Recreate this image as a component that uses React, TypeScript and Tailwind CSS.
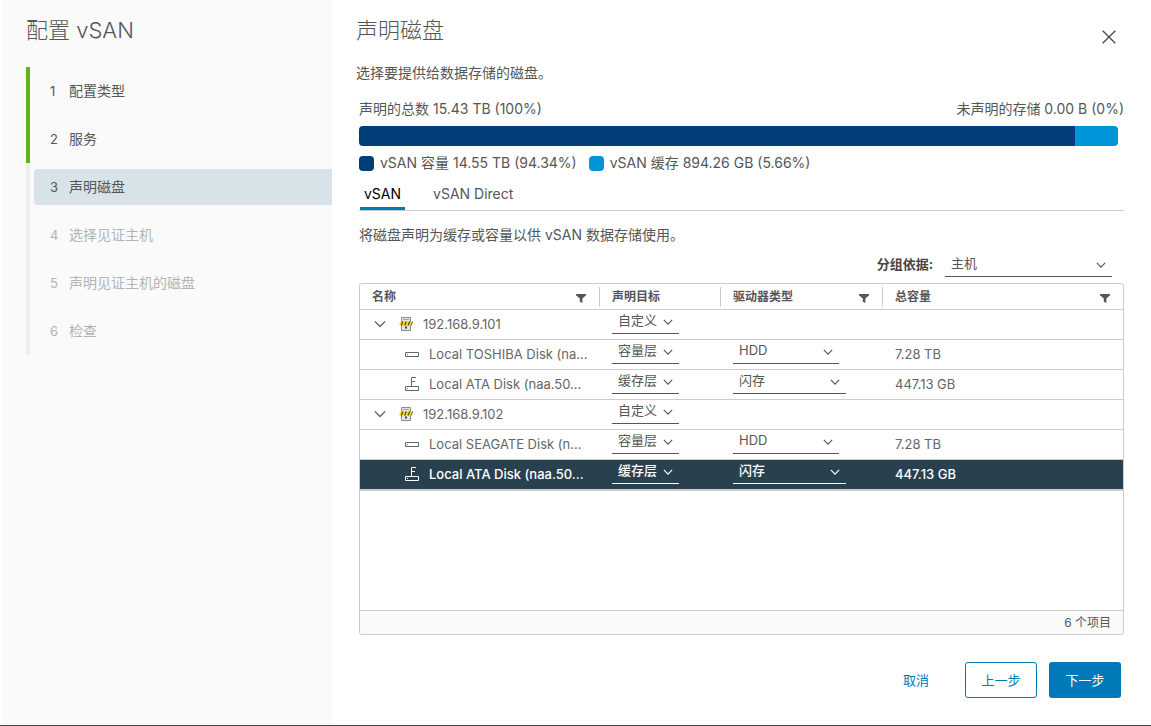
import React from "react";

type Option = { label: string; width: string };

type Row = {
  name: string;
  kind: "host" | "hdd" | "flash";
  target: string;
  drive?: Option;
  capacity?: string;
  selected?: boolean;
};

const steps = [
  { label: "配置类型", state: "done" },
  { label: "服务", state: "done" },
  { label: "声明磁盘", state: "active" },
  { label: "选择见证主机", state: "todo" },
  { label: "声明见证主机的磁盘", state: "todo" },
  { label: "检查", state: "todo" },
];

const usage = [
  { label: "vSAN 容量 14.55 TB (94.34%)", percent: 94.34, color: "bg-[#003d79]" },
  { label: "vSAN 缓存 894.26 GB (5.66%)", percent: 5.66, color: "bg-[#0095d9]" },
];

const hdd = { label: "HDD", width: "w-[106px]" };
const flash = { label: "闪存", width: "w-[113px]" };

const rows: Row[] = [
  { name: "192.168.9.101", kind: "host", target: "自定义" },
  { name: "Local TOSHIBA Disk (na...", kind: "hdd", target: "容量层", drive: hdd, capacity: "7.28 TB" },
  { name: "Local ATA Disk (naa.50...", kind: "flash", target: "缓存层", drive: flash, capacity: "447.13 GB" },
  { name: "192.168.9.102", kind: "host", target: "自定义" },
  { name: "Local SEAGATE Disk (n...", kind: "hdd", target: "容量层", drive: hdd, capacity: "7.28 TB" },
  {
    name: "Local ATA Disk (naa.50...",
    kind: "flash",
    target: "缓存层",
    drive: flash,
    capacity: "447.13 GB",
    selected: true,
  },
];

const columns = [
  { label: "名称", filter: true },
  { label: "声明目标", filter: false },
  { label: "驱动器类型", filter: true },
  { label: "总容量", filter: true },
];

const Chevron: React.FC<{ className: string }> = ({ className }) => (
  <svg viewBox="0 0 12 12" fill="none" stroke="currentColor" className={className}>
    <path d="M1 3.5 6 8.5 11 3.5" strokeWidth="1.4" />
  </svg>
);

const FilterIcon: React.FC = () => (
  <svg viewBox="0 0 10 9" fill="currentColor" className="h-[9px] w-[10px]">
    <path d="M0 0h10v1.200L6.400 4.600V9L3.800 7.800V4.600L0 1.200z" />
  </svg>
);

const HostIcon: React.FC = () => (
  <svg viewBox="0 0 16 16" fill="none" className="size-4 shrink-0">
    <path d="M3.500 1.500h9v13h-9z" fill="#e4e4e4" stroke="#8a8a8a" />
    <path d="M5 3.500h6" stroke="#a0a0a0" />
    <path d="M7 10.500h2v2H7z" fill="#454545" />
    <path d="M2.500 5.500H15L13.500 9.500H1z" fill="#fdd90b" />
    <path
      d="M4.200 5.500h1.300l-1.500 4H2.700zM7.600 5.500h1.300l-1.500 4H6.100zM11 5.500h1.300l-1.500 4H9.500zM14.200 5.500h.8l-1.500 4h-.8z"
      fill="#454545"
    />
  </svg>
);

const HddIcon: React.FC = () => (
  <svg viewBox="0 0 16 16" fill="none" stroke="currentColor" className="size-4 shrink-0">
    <path d="M1.500 6.500h13v4h-13z" />
    <path d="M3 8.500h1" />
  </svg>
);

const FlashIcon: React.FC = () => (
  <svg viewBox="0 0 16 16" fill="none" stroke="currentColor" className="size-4 shrink-0">
    <path d="M1.500 10.500h13v4h-13zM3 12.500h1" />
    <path d="M7.500 10V1.500H12M7.500 5.500H11" />
  </svg>
);

const InlineSelect: React.FC<{ label: string; value: string; width: string }> = ({
  label,
  value,
  width,
}) => (
  <div className={`relative ${width}`}>
    <select
      aria-label={label}
      className="block h-6 w-full appearance-none border-b border-current bg-transparent px-1.5 pb-1 text-[13px] leading-5"
    >
      <option>{value}</option>
    </select>
    <Chevron className="pointer-events-none absolute top-[7px] right-1.5 size-[10px]" />
  </div>
);

const NameCell: React.FC<{ row: Row }> = ({ row }) => {
  if (row.kind === "host") {
    return (
      <div className="flex items-center pl-3.5">
        <button type="button" aria-label="折叠" className="mr-3">
          <Chevron className="size-3" />
        </button>
        <HostIcon />
        <span className="ml-[9px]">{row.name}</span>
      </div>
    );
  }
  return (
    <div className="flex items-center pl-11">
      {row.kind === "hdd" ? <HddIcon /> : <FlashIcon />}
      <span className="ml-[9px] whitespace-nowrap">{row.name}</span>
    </div>
  );
};

const Sidebar: React.FC = () => (
  <aside className="w-[332px] shrink-0 border-l-2 border-white bg-[#fafafa] pt-4 pl-6">
    <h1 className="text-[22px] leading-7 font-light">配置 vSAN</h1>
    <ol className="mt-[23px]">
      {steps.map((step, i) => (
        <li
          key={step.label}
          className={`border-l-4 py-1.5 pl-1 ${
            step.state === "done" ? "border-[#60b515]" : "border-[#eeeeee]"
          }`}
        >
          <button
            type="button"
            disabled={step.state === "todo"}
            className={`flex h-9 w-full items-center rounded-l pl-4 text-left text-[14px] leading-5 ${
              step.state === "active" ? "bg-[#d8e3e9]" : ""
            } ${step.state === "todo" ? "text-[#b3b3b3]" : ""}`}
          >
            <span className="w-[19px] text-[13px]">{i + 1}</span>
            {step.label}
          </button>
        </li>
      ))}
    </ol>
  </aside>
);

const DiskGrid: React.FC = () => (
  <div className="mt-1.5 flex flex-1 flex-col rounded-[3px] border border-[#cccccc]">
    <div className="border-b border-[#cccccc]">
      <table className="w-full table-fixed border-separate border-spacing-0 text-[13px] leading-5">
        <colgroup>
          <col className="w-[240px]" />
          <col className="w-[121px]" />
          <col className="w-[162px]" />
          <col />
        </colgroup>
        <thead>
          <tr>
            {columns.map((col, i) => (
              <th key={col.label} className="h-[26px] border-b border-[#cccccc] p-0">
                <div
                  className={`flex h-5 items-center justify-between pr-[13px] pl-3 text-[12px] leading-5 font-bold ${
                    i < columns.length - 1 ? "border-r border-[#cccccc]" : ""
                  }`}
                >
                  {col.label}
                  {col.filter && (
                    <button type="button" aria-label={`筛选${col.label}`} className="pt-1">
                      <FilterIcon />
                    </button>
                  )}
                </div>
              </th>
            ))}
          </tr>
        </thead>
        <tbody>
          {rows.map((row, i) => (
            <tr key={i} className={row.selected ? "bg-[#29414e] font-medium text-white" : ""}>
              <td
                className={`h-[30px] border-b border-[#cccccc] p-0 pb-0.5 ${
                  row.selected ? "" : "text-[#666666]"
                }`}
              >
                <NameCell row={row} />
              </td>
              <td className="border-b border-[#cccccc] p-0 pl-3 align-top">
                <InlineSelect label="声明目标" value={row.target} width="w-[67px]" />
              </td>
              <td className="border-b border-[#cccccc] p-0 pl-3 align-top">
                {row.drive && (
                  <InlineSelect label="驱动器类型" value={row.drive.label} width={row.drive.width} />
                )}
              </td>
              <td
                className={`border-b border-[#cccccc] p-0 pb-0.5 pl-3 ${
                  row.selected ? "" : "text-[#666666]"
                }`}
              >
                {row.capacity}
              </td>
            </tr>
          ))}
        </tbody>
      </table>
    </div>
    <div className="mt-auto flex h-6 items-center justify-end rounded-b-[3px] border-t border-[#cccccc] bg-[#fafafa] pr-3 text-[12px] leading-5">
      6 个项目
    </div>
  </div>
);

const App: React.FC = () => {
  return (
    <div className="flex min-h-screen border-b border-[#454545] bg-white font-['Inter','Noto_Sans_CJK_SC',sans-serif] text-[#565656]">
      <Sidebar />
      <main className="flex min-w-0 flex-1 flex-col pt-4 pr-[27px] pb-[27px] pl-6">
        <div className="flex items-end justify-between">
          <h2 className="text-[22px] leading-7 font-light">声明磁盘</h2>
          <button type="button" aria-label="关闭" className="mr-2">
            <svg viewBox="0 0 14 14" stroke="#454545" strokeWidth="1.300" className="size-3.5">
              <path d="M.7.7 13.300 13.300M13.300.7.7 13.300" />
            </svg>
          </button>
        </div>
        <p className="mt-[19px] text-[14px] leading-5">选择要提供给数据存储的磁盘。</p>

        <div className="flex flex-1 flex-col pl-[3px] text-[14px] leading-5">
          <div className="mt-4 flex justify-between">
            <span>声明的总数 15.43 TB (100%)</span>
            <span>未声明的存储 0.00 B (0%)</span>
          </div>
          <div className="mt-[7px] mr-1.5 flex h-5 overflow-hidden rounded">
            {usage.map((u) => (
              <div key={u.label} className={u.color} style={{ width: `${u.percent}%` }} />
            ))}
          </div>
          <div className="mt-[7px] flex gap-3">
            {usage.map((u) => (
              <div key={u.label} className="flex items-center gap-1.5">
                <span className={`size-[15px] rounded ${u.color}`} />
                {u.label}
              </div>
            ))}
          </div>

          <div role="tablist" className="flex gap-6 border-b border-[#cccccc] pl-px">
            <button
              type="button"
              role="tab"
              aria-selected="true"
              className="h-[37px] border-b-3 border-[#0079b8] px-1 pt-2 text-black"
            >
              vSAN
            </button>
            <button type="button" role="tab" aria-selected="false" className="h-[37px] px-1 pt-[5px]">
              vSAN Direct
            </button>
          </div>

          <p className="mt-3.5">将磁盘声明为缓存或容量以供 vSAN 数据存储使用。</p>

          <div className="mt-[7px] mr-3 flex items-center justify-end text-[13px]">
            <label htmlFor="group-by" className="mr-3 pb-0.5 font-bold text-[#454545]">
              分组依据:
            </label>
            <div className="relative w-[167px]">
              <select
                id="group-by"
                className="block h-[25px] w-full appearance-none border-b border-current bg-transparent px-1.5 pb-0.5"
              >
                <option>主机</option>
              </select>
              <Chevron className="pointer-events-none absolute top-2 right-1.5 size-[10px]" />
            </div>
          </div>

          <DiskGrid />
        </div>

        <div className="mt-[27px] mr-[3px] flex justify-end gap-3 text-[13px] leading-5 text-[#0079b8]">
          <button type="button" className="h-9 px-6">
            取消
          </button>
          <button type="button" className="h-9 w-[72px] rounded-[3px] border border-[#0079b8]">
            上一步
          </button>
          <button type="button" className="h-9 w-[72px] rounded-[3px] bg-[#0079b8] text-white">
            下一步
          </button>
        </div>
      </main>
    </div>
  );
};

export default App;
